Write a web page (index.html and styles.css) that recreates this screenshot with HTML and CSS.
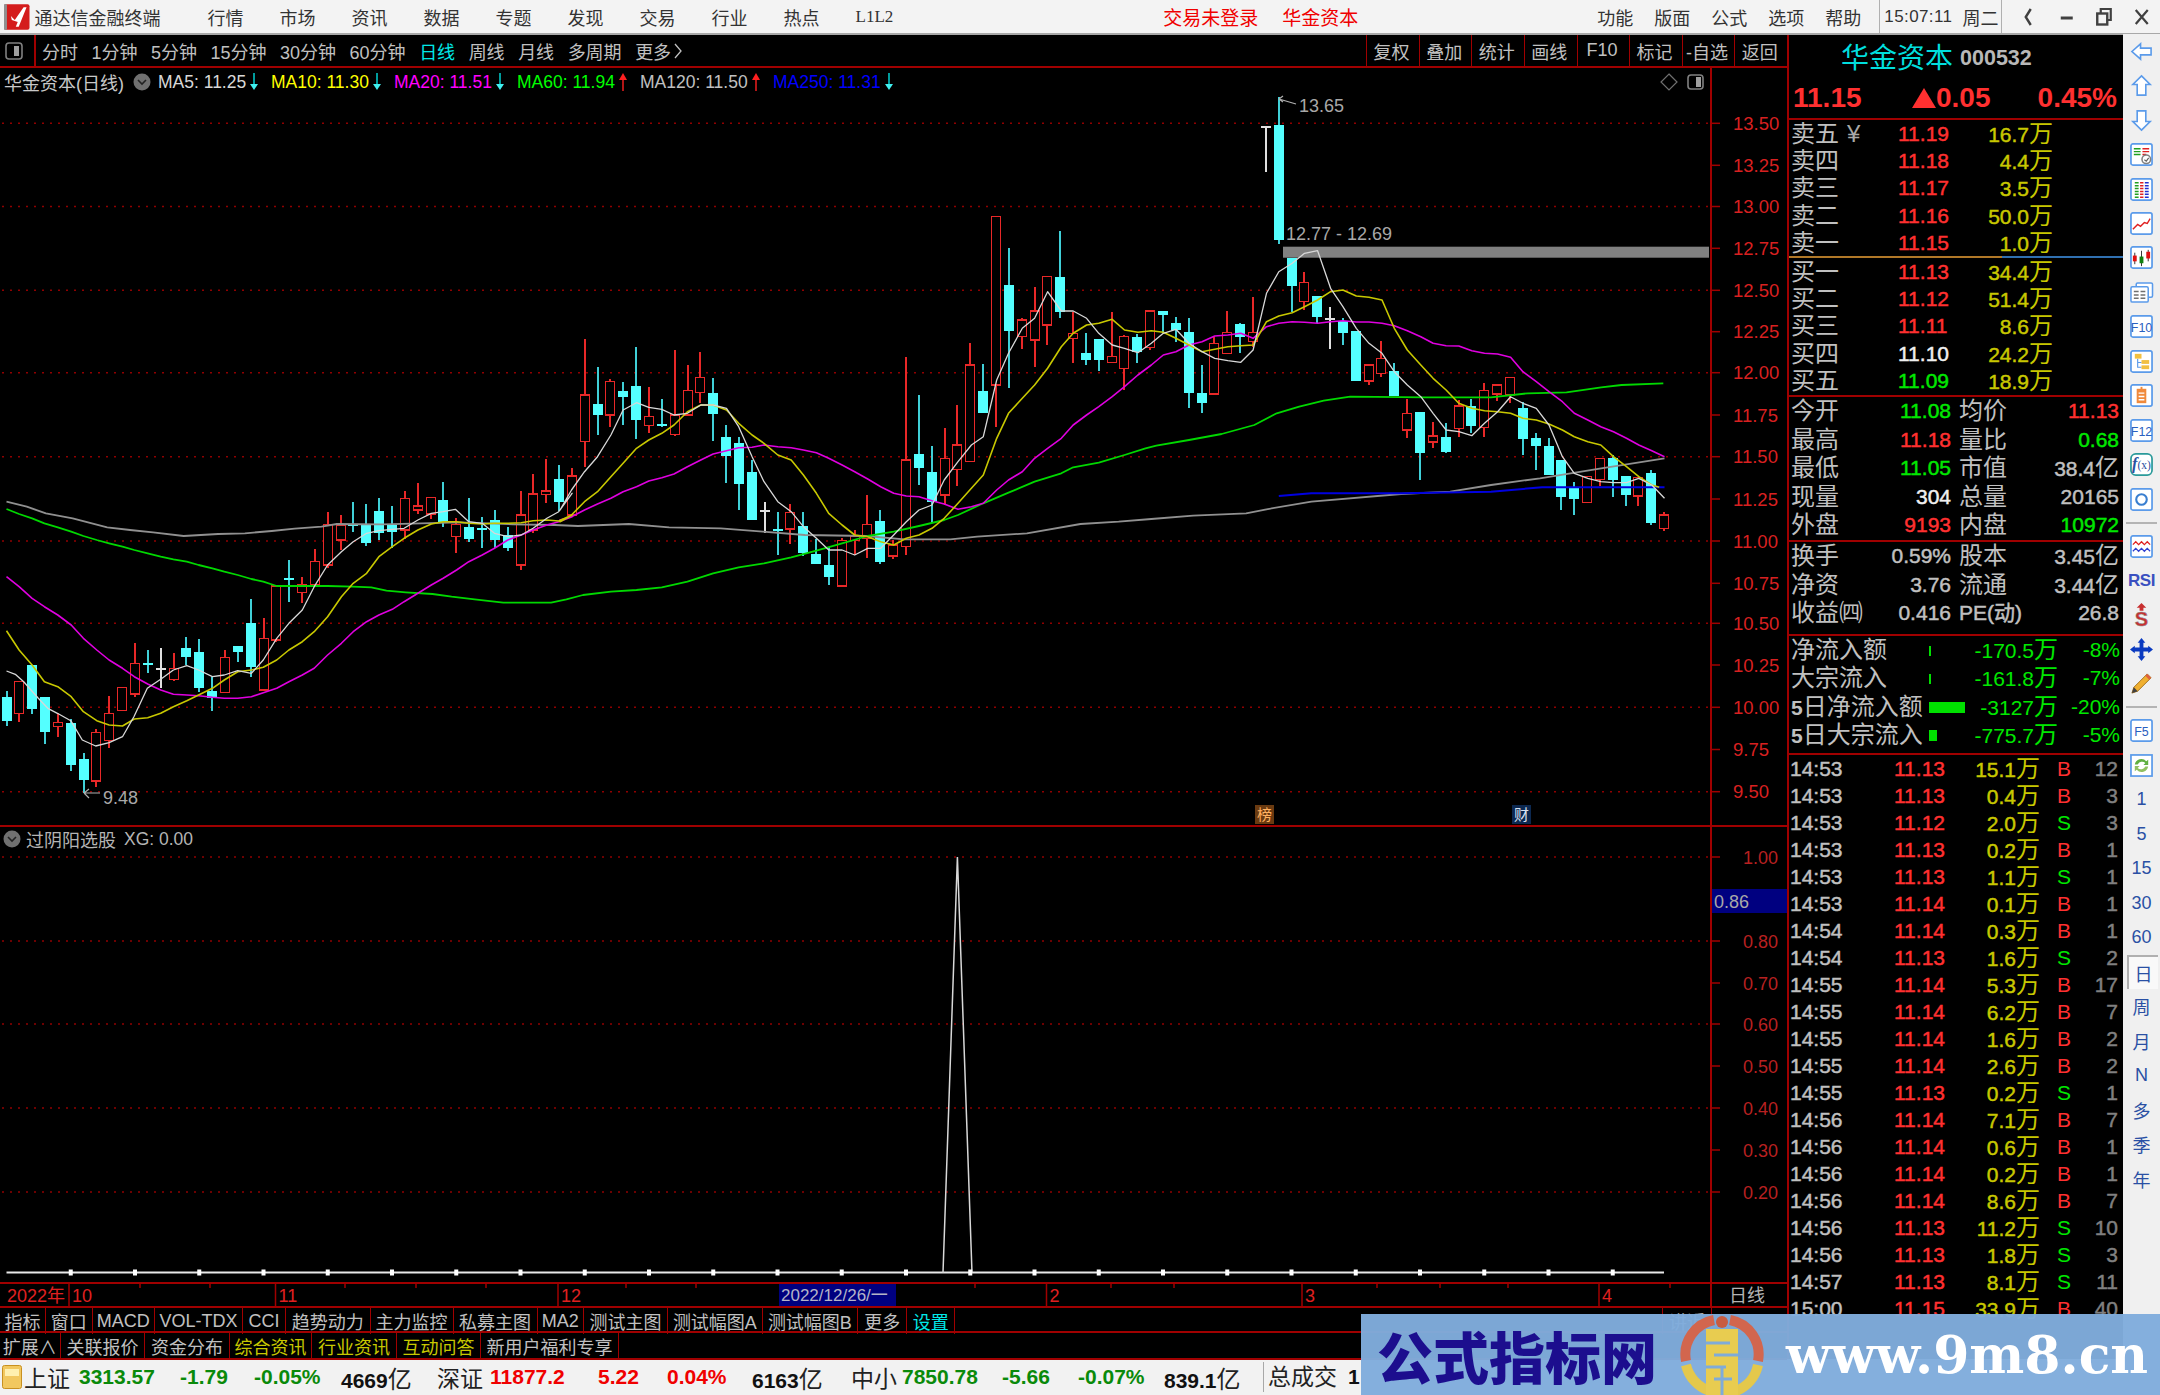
FILE: index.html
```html
<!DOCTYPE html>
<html lang="zh-CN">
<head>
<meta charset="utf-8">
<title>通达信金融终端</title>
<link rel="stylesheet" href="styles.css">
</head>
<body>
<svg class="defs" width="0" height="0">
  <symbol id="arrow-down" viewBox="0 0 10 18"><path d="M5 0V13" stroke="#00e0e0" stroke-width="1.4" fill="none"/><path d="M1 11H9L5 17Z" fill="#40f0f0"/></symbol>
  <symbol id="arrow-up" viewBox="0 0 10 18"><path d="M5 5V18" stroke="#ff2020" stroke-width="1.4" fill="none"/><path d="M1 7H9L5 0Z" fill="#ff2020"/></symbol>
  <symbol id="chev" viewBox="0 0 18 18"><circle cx="9" cy="9" r="8.5" fill="#707070"/><path d="M5 7L9 11L13 7" stroke="#222" stroke-width="1.6" fill="none"/></symbol>
  <symbol id="box" viewBox="0 0 24 24"><rect x="1" y="1" width="22" height="22" rx="2" fill="#fff" stroke="#5b9bea" stroke-width="1.8"/></symbol>
</svg>

<header class="menubar">
  <svg class="logo" viewBox="0 0 26 26"><rect width="26" height="26" rx="2" fill="#d41c1c"/><rect x="0" y="0" width="3" height="26" fill="#909090"/><path d="M7 12L11 16L20 3L23 3L15 23H12L14 18L8 16Z" fill="#fff"/></svg>
  <span class="title">通达信金融终端</span>
  <nav class="menu menu-main">
    <span>行情</span><span>市场</span><span>资讯</span><span>数据</span><span>专题</span><span>发现</span><span>交易</span><span>行业</span><span>热点</span><span class="l1l2">L1L2</span>
  </nav>
  <span class="alert alert-login">交易未登录</span>
  <span class="alert alert-name">华金资本</span>
  <nav class="menu menu-right"><span>功能</span><span>版面</span><span>公式</span><span>选项</span><span>帮助</span></nav>
  <div class="clock"><span class="clock-time">15:07:11</span><span>周二</span></div>
  <div class="winbtns">
    <svg viewBox="0 0 18 22"><path d="M11 3L6 11L11 19" stroke="#404040" stroke-width="2.4" fill="none"/></svg>
    <svg viewBox="0 0 18 22"><path d="M3 12H15" stroke="#404040" stroke-width="3" fill="none"/></svg>
    <svg viewBox="0 0 18 22"><path d="M6 7V3H16V14H12" stroke="#404040" stroke-width="2.2" fill="none"/><rect x="2.5" y="7.5" width="10" height="11" stroke="#404040" stroke-width="2.4" fill="none"/></svg>
    <svg viewBox="0 0 18 22"><path d="M3 4L15 18M15 4L3 18" stroke="#404040" stroke-width="2.2" fill="none"/></svg>
  </div>
</header>

<main class="workspace">
  <section class="left">
    <div class="toolbar">
      <div class="tb-icon"><svg viewBox="0 0 18 18"><rect x="1" y="1" width="16" height="16" rx="3" fill="none" stroke="#808080" stroke-width="1.6"/><rect x="9" y="4" width="5" height="10" fill="#a0a0a0"/></svg></div>
      <nav class="periods">
        <span>分时</span><span>1分钟</span><span>5分钟</span><span>15分钟</span><span>30分钟</span><span>60分钟</span><span class="cyan">日线</span><span>周线</span><span>月线</span><span>多周期</span><span class="more">更多<svg viewBox="0 0 10 18"><path d="M2 2L8 9L2 16" stroke="#c0c0c0" stroke-width="1.3" fill="none"/></svg></span>
      </nav>
      <div class="tools"><span>复权</span><span>叠加</span><span>统计</span><span>画线</span><span>F10</span><span>标记</span><span>-自选</span><span>返回</span></div>
    </div>

    <div class="pane pane-main">
      <svg id="chart-main" class="plot" viewBox="0 68 1787 757"></svg>
      <div class="legend">
        <span class="lg-name">华金资本(日线)</span>
        <svg class="lg-chev"><use href="#chev"/></svg>
        <span class="lg-ma ma5">MA5: 11.25<svg><use href="#arrow-down"/></svg></span>
        <span class="lg-ma ma10">MA10: 11.30<svg><use href="#arrow-down"/></svg></span>
        <span class="lg-ma ma20">MA20: 11.51<svg><use href="#arrow-down"/></svg></span>
        <span class="lg-ma ma60">MA60: 11.94<svg><use href="#arrow-up"/></svg></span>
        <span class="lg-ma ma120">MA120: 11.50<svg><use href="#arrow-up"/></svg></span>
        <span class="lg-ma ma250">MA250: 11.31<svg><use href="#arrow-down"/></svg></span>
      </div>
      <div class="chart-tools">
        <svg viewBox="0 0 18 18"><path d="M9 1L17 9L9 17L1 9Z" fill="none" stroke="#707070" stroke-width="1.2"/></svg>
        <svg viewBox="0 0 18 18"><rect x="1" y="2" width="15" height="14" rx="3" fill="none" stroke="#808080" stroke-width="1.6"/><rect x="9" y="4" width="5" height="10" fill="#a0a0a0"/></svg>
      </div>
      <span class="flag flag-bang">榜</span>
      <span class="flag flag-cai">财</span>
    </div>

    <div class="pane pane-ind">
      <svg id="chart-ind" class="plot" viewBox="0 827 1787 455"></svg>
      <div class="ind-legend"><svg><use href="#chev"/></svg><span>过阴阳选股</span><span class="ind-val">XG: 0.00</span></div>
    </div>

    <div class="dates">
      <svg id="chart-dates" class="plot" viewBox="0 1283 1787 22"></svg>
    </div>

    <div class="tabs tabs-a">
      <span>指标</span><span>窗口</span><span>MACD</span><span>VOL-TDX</span><span>CCI</span><span>趋势动力</span><span>主力监控</span><span>私募主图</span><span>MA2</span><span>测试主图</span><span>测试幅图A</span><span>测试幅图B</span><span>更多</span><span class="cyan">设置</span>
      <span class="tab-spacer"></span><span class="tab-far">讲近</span><span class="tab-far2"></span>
    </div>
    <div class="tabs tabs-b">
      <span>扩展∧</span><span>关联报价</span><span>资金分布</span><span class="olive">综合资讯</span><span class="olive">行业资讯</span><span class="olive">互动问答</span><span>新用户福利专享</span>
    </div>
  </section>

  <section class="quote">
    <div class="q-head">
      <div class="q-title"><span class="q-name">华金资本</span><span class="q-code">000532</span></div>
      <div class="q-price"><span>11.15</span><span class="q-change"><i class="tri"></i>0.05</span><span class="q-pct">0.45%</span></div>
    </div>

    <div class="book">
      <div class="bk"><span>卖五<b class="yen">¥</b></span><span class="red">11.19</span><span class="vol">16.7<em>万</em></span></div>
      <div class="bk"><span>卖四</span><span class="red">11.18</span><span class="vol">4.4<em>万</em></span></div>
      <div class="bk"><span>卖三</span><span class="red">11.17</span><span class="vol">3.5<em>万</em></span></div>
      <div class="bk"><span>卖二</span><span class="red">11.16</span><span class="vol">50.0<em>万</em></span></div>
      <div class="bk"><span>卖一</span><span class="red">11.15</span><span class="vol">1.0<em>万</em></span></div>
    </div>
    <div class="book-split"><i></i><i></i></div>
    <div class="book book-buy">
      <div class="bk"><span>买一</span><span class="red">11.13</span><span class="vol">34.4<em>万</em></span></div>
      <div class="bk"><span>买二</span><span class="red">11.12</span><span class="vol">51.4<em>万</em></span></div>
      <div class="bk"><span>买三</span><span class="red">11.11</span><span class="vol">8.6<em>万</em></span></div>
      <div class="bk"><span>买四</span><span class="white">11.10</span><span class="vol">24.2<em>万</em></span></div>
      <div class="bk"><span>买五</span><span class="green">11.09</span><span class="vol">18.9<em>万</em></span></div>
    </div>

    <div class="stats stats-a">
      <div class="st"><span>今开</span><span class="green">11.08</span><span>均价</span><span class="red">11.13</span></div>
      <div class="st"><span>最高</span><span class="red">11.18</span><span>量比</span><span class="green">0.68</span></div>
      <div class="st"><span>最低</span><span class="green">11.05</span><span>市值</span><span class="grey">38.4<em>亿</em></span></div>
      <div class="st"><span>现量</span><span class="white">304</span><span>总量</span><span class="grey">20165</span></div>
      <div class="st"><span>外盘</span><span class="red">9193</span><span>内盘</span><span class="green">10972</span></div>
    </div>
    <div class="stats stats-b">
      <div class="st"><span>换手</span><span class="grey">0.59%</span><span>股本</span><span class="grey">3.45<em>亿</em></span></div>
      <div class="st"><span>净资</span><span class="grey">3.76</span><span>流通</span><span class="grey">3.44<em>亿</em></span></div>
      <div class="st"><span>收益㈣</span><span class="grey">0.416</span><span class="pe">PE(动)</span><span class="grey">26.8</span></div>
    </div>

    <div class="flows">
      <div class="fl"><span>净流入额</span><i class="bar bar-tick"></i><span class="fl-val">-170.5<em>万</em></span><span class="fl-pct">-8%</span></div>
      <div class="fl"><span>大宗流入</span><i class="bar bar-tick"></i><span class="fl-val">-161.8<em>万</em></span><span class="fl-pct">-7%</span></div>
      <div class="fl"><span><b>5</b>日净流入额</span><i class="bar bar-long"></i><span class="fl-val">-3127<em>万</em></span><span class="fl-pct">-20%</span></div>
      <div class="fl"><span><b>5</b>日大宗流入</span><i class="bar bar-small"></i><span class="fl-val">-775.7<em>万</em></span><span class="fl-pct">-5%</span></div>
    </div>

    <div class="trades">
      <div class="tr"><span>14:53</span><span class="red">11.13</span><span class="vol">15.1<em>万</em></span><span class="b">B</span><span class="n">12</span></div>
      <div class="tr"><span>14:53</span><span class="red">11.13</span><span class="vol">0.4<em>万</em></span><span class="b">B</span><span class="n">3</span></div>
      <div class="tr"><span>14:53</span><span class="red">11.12</span><span class="vol">2.0<em>万</em></span><span class="s">S</span><span class="n">3</span></div>
      <div class="tr"><span>14:53</span><span class="red">11.13</span><span class="vol">0.2<em>万</em></span><span class="b">B</span><span class="n">1</span></div>
      <div class="tr"><span>14:53</span><span class="red">11.13</span><span class="vol">1.1<em>万</em></span><span class="s">S</span><span class="n">1</span></div>
      <div class="tr"><span>14:53</span><span class="red">11.14</span><span class="vol">0.1<em>万</em></span><span class="b">B</span><span class="n">1</span></div>
      <div class="tr"><span>14:54</span><span class="red">11.14</span><span class="vol">0.3<em>万</em></span><span class="b">B</span><span class="n">1</span></div>
      <div class="tr"><span>14:54</span><span class="red">11.13</span><span class="vol">1.6<em>万</em></span><span class="s">S</span><span class="n">2</span></div>
      <div class="tr"><span>14:55</span><span class="red">11.14</span><span class="vol">5.3<em>万</em></span><span class="b">B</span><span class="n">17</span></div>
      <div class="tr"><span>14:55</span><span class="red">11.14</span><span class="vol">6.2<em>万</em></span><span class="b">B</span><span class="n">7</span></div>
      <div class="tr"><span>14:55</span><span class="red">11.14</span><span class="vol">1.6<em>万</em></span><span class="b">B</span><span class="n">2</span></div>
      <div class="tr"><span>14:55</span><span class="red">11.14</span><span class="vol">2.6<em>万</em></span><span class="b">B</span><span class="n">2</span></div>
      <div class="tr"><span>14:55</span><span class="red">11.13</span><span class="vol">0.2<em>万</em></span><span class="s">S</span><span class="n">1</span></div>
      <div class="tr"><span>14:56</span><span class="red">11.14</span><span class="vol">7.1<em>万</em></span><span class="b">B</span><span class="n">7</span></div>
      <div class="tr"><span>14:56</span><span class="red">11.14</span><span class="vol">0.6<em>万</em></span><span class="b">B</span><span class="n">1</span></div>
      <div class="tr"><span>14:56</span><span class="red">11.14</span><span class="vol">0.2<em>万</em></span><span class="b">B</span><span class="n">1</span></div>
      <div class="tr"><span>14:56</span><span class="red">11.14</span><span class="vol">8.6<em>万</em></span><span class="b">B</span><span class="n">7</span></div>
      <div class="tr"><span>14:56</span><span class="red">11.13</span><span class="vol">11.2<em>万</em></span><span class="s">S</span><span class="n">10</span></div>
      <div class="tr"><span>14:56</span><span class="red">11.13</span><span class="vol">1.8<em>万</em></span><span class="s">S</span><span class="n">3</span></div>
      <div class="tr"><span>14:57</span><span class="red">11.13</span><span class="vol">8.1<em>万</em></span><span class="s">S</span><span class="n">11</span></div>
      <div class="tr"><span>15:00</span><span class="red">11.15</span><span class="vol">33.9<em>万</em></span><span class="b">B</span><span class="n">40</span></div>
    </div>
  </section>

  <aside class="side">
    <div class="sb"><svg viewBox="0 0 24 24"><path d="M2 12L11 4V8.500H22V15.500H11V20Z" fill="#fff" stroke="#5b9bea" stroke-width="1.7"/></svg></div>
    <div class="sb"><svg viewBox="0 0 24 24"><path d="M12 2L21 11H16.500V22H7.500V11H3Z" fill="#fff" stroke="#5b9bea" stroke-width="1.7"/></svg></div>
    <div class="sb"><svg viewBox="0 0 24 24"><path d="M12 22L21 13H16.500V2H7.500V13H3Z" fill="#fff" stroke="#5b9bea" stroke-width="1.7"/></svg></div>
    <div class="sb"><svg viewBox="0 0 24 24"><use href="#box"/><path d="M4 6H11M4 9H11M4 12H11" stroke="#20a020" stroke-width="1.5"/><path d="M13 6H20M13 9H20M13 12H17" stroke="#e02020" stroke-width="1.5"/><circle cx="17" cy="17" r="4.500" fill="#fff" stroke="#808080" stroke-width="1.600"/><path d="M15 17.500L17 19L19.500 15.500" stroke="#606060" stroke-width="1.200" fill="none"/></svg></div>
    <div class="sb"><svg viewBox="0 0 24 24"><use href="#box"/><path d="M5 5H9M5 8H9M5 11H9M5 14H9M5 17H9M5 20H9" stroke="#20a020" stroke-width="1.500"/><path d="M10.500 5H14M10.500 8H14M10.500 11H14M10.500 14H14M10.500 17H14M10.500 20H14" stroke="#e02020" stroke-width="1.500"/><path d="M15.500 5H19.500M15.500 8H19.500M15.500 11H19.500M15.500 14H19.500M15.500 17H19.500M15.500 20H19.500" stroke="#2030d0" stroke-width="1.500"/></svg></div>
    <div class="sb"><svg viewBox="0 0 24 24"><use href="#box"/><path d="M3 18L8 13L11 15L15 11L18 12L21 7" stroke="#e02020" stroke-width="1.500" fill="none"/></svg></div>
    <div class="sb"><svg viewBox="0 0 24 24"><use href="#box"/><path d="M5 7V19M12 5V21M19 4V16" stroke="#303030" stroke-width="1"/><rect x="3" y="10" width="4" height="6" fill="#e01010"/><rect x="10" y="11" width="4" height="7" fill="#108010"/><rect x="17" y="6" width="4" height="7" fill="#e01010"/></svg></div>
    <div class="sb"><svg viewBox="0 0 24 24"><rect x="6.500" y="2" width="17" height="15" rx="1.500" fill="#fff" stroke="#5b9bea" stroke-width="1.600"/><rect x="1" y="6" width="18" height="16" rx="1.500" fill="#fff" stroke="#5b9bea" stroke-width="1.600"/><path d="M4 11H9M11 11H16M4 14.500H9M11 14.500H16M4 18H9M11 18H16" stroke="#707070" stroke-width="1.600"/></svg></div>
    <div class="sb"><svg viewBox="0 0 24 24"><use href="#box"/><text x="12" y="17.500" class="sb-t">F10</text></svg></div>
    <div class="sb"><svg viewBox="0 0 24 24"><use href="#box"/><path d="M8 9V18H12M8 13H12" stroke="#5b9bea" stroke-width="1.200" fill="none"/><rect x="5" y="4" width="7" height="5" fill="#f2c040"/><rect x="12" y="10.500" width="8" height="4" fill="#f2c040"/><rect x="12" y="16" width="8" height="4" fill="#f2c040"/></svg></div>
    <div class="sb"><svg viewBox="0 0 24 24"><use href="#box"/><rect x="7" y="5" width="10" height="15" fill="#f08a3c"/><rect x="11" y="3" width="2" height="3" fill="#f08a3c"/><path d="M9 9.500H15M9 13H15M9 16.500H15" stroke="#fff" stroke-width="1.500"/></svg></div>
    <div class="sb"><svg viewBox="0 0 24 24"><use href="#box"/><text x="12" y="17.500" class="sb-t">F12</text></svg></div>
    <div class="sb"><svg viewBox="0 0 24 24"><rect x="1" y="1" width="22" height="22" rx="5" fill="#fff" stroke="#2a9a9a" stroke-width="1.800"/><text x="12" y="17" class="sb-f"><tspan class="sb-fi">f</tspan>(x)</text></svg></div>
    <div class="sb"><svg viewBox="0 0 24 24"><use href="#box"/><circle cx="12" cy="12" r="5.500" fill="none" stroke="#3a7fd0" stroke-width="2.200"/></svg></div>
    <div class="sb-sep"></div>
    <div class="sb"><svg viewBox="0 0 24 24"><use href="#box"/><path d="M3 10L6 7L9 10L12 7L15 10L18 7L21 10" stroke="#e02020" stroke-width="1.300" fill="none"/><path d="M3 17L6 14L9 17L12 14L15 17L18 14L21 17" stroke="#3040d0" stroke-width="1.300" fill="none"/></svg></div>
    <div class="sb"><span class="sb-rsi">RSI</span></div>
    <div class="sb"><svg viewBox="0 0 24 24"><path d="M12 0L17 5H14V8H10V5H7Z" fill="#c83030"/><text x="12" y="24" class="sb-s">S</text></svg></div>
    <div class="sb"><svg viewBox="0 0 24 24"><path d="M12 0L16 5H14V10H19V8L24 12L19 16V14H14V19H16L12 24L8 19H10V14H5V16L0 12L5 8V10H10V5H8Z" fill="#0a3ac0"/></svg></div>
    <div class="sb"><svg viewBox="0 0 24 24"><path d="M2 22L4 16L18 2L22 6L8 20Z" fill="#f0b030" stroke="#a07020" stroke-width="1"/><path d="M16 4L20 8L22 6L18 2Z" fill="#e06040"/><path d="M2 22L4 16L8 20Z" fill="#404040"/></svg></div>
    <div class="sb-sep"></div>
    <div class="sb"><svg viewBox="0 0 24 24"><use href="#box"/><text x="12" y="17.500" class="sb-t">F5</text></svg></div>
    <div class="sb"><svg viewBox="0 0 24 24"><rect x="1" y="1" width="22" height="22" fill="#fff" stroke="#5b9bea" stroke-width="1.800"/><path d="M5 11A7 7 0 0 1 17 7.500L19 6V11.500H14L16 9.500A5 5 0 0 0 8 11Z" fill="#60b040"/><path d="M19 13A7 7 0 0 1 7 16.500L5 18V12.500H10L8 14.500A5 5 0 0 0 16 13Z" fill="#90c060"/></svg></div>
    <div class="sb sb-n">1</div>
    <div class="sb sb-n">5</div>
    <div class="sb sb-n">15</div>
    <div class="sb sb-n">30</div>
    <div class="sb sb-n">60</div>
    <div class="sb sb-n sb-on">日</div>
    <div class="sb sb-n">周</div>
    <div class="sb sb-n">月</div>
    <div class="sb sb-n">N</div>
    <div class="sb sb-n">多</div>
    <div class="sb sb-n">季</div>
    <div class="sb sb-n">年</div>
  </aside>
</main>

<footer class="status">
  <svg class="st-ico" viewBox="0 0 20 24"><rect x="0.500" y="0.500" width="19" height="23" rx="2" fill="#f2c860" stroke="#c89020"/><rect x="3" y="4" width="14" height="7" fill="#fff0b0"/></svg>
  <span class="idx">上证</span><span class="up">3313.57</span><span class="up">-1.79</span><span class="up">-0.05%</span><span class="amt">4669<em>亿</em></span>
  <span class="idx">深证</span><span class="dn">11877.2</span><span class="dn">5.22</span><span class="dn">0.04%</span><span class="amt">6163<em>亿</em></span>
  <span class="idx">中小</span><span class="up">7850.78</span><span class="up">-5.66</span><span class="up">-0.07%</span><span class="amt">839.1<em>亿</em></span>
  <span class="idx total">总成交</span><span class="amt">1</span>
</footer>

<div class="watermark">
  <span class="wm-cn">公式指标网</span>
  <svg class="wm-logo" viewBox="0 0 84 80">
    <path d="M6 46A35 35 0 0 1 34 5" stroke="#d2664e" stroke-width="10" fill="none"/>
    <path d="M50 5A35 35 0 0 1 78 46" stroke="#d2664e" stroke-width="10" fill="none"/>
    <path d="M6 50A36 36 0 0 0 30 76" stroke="#e4c84c" stroke-width="10" fill="none"/>
    <path d="M78 50A36 36 0 0 1 56 76" stroke="#e4c84c" stroke-width="10" fill="none"/>
    <circle cx="42" cy="7" r="6" fill="#c85c40"/>
    <rect x="26" y="14" width="32" height="66" fill="#e8cc50"/>
    <path d="M26 28H50M34 40H58M26 52H46M42 52V80M34 64H52" stroke="#7fabd9" stroke-width="3" fill="none"/>
  </svg>
  <span class="wm-url">www.9m8.cn</span>
</div>

<script src="chart.js"></script>
</body>
</html>
```
FILE: styles.css
```css
* { box-sizing: border-box; margin: 0; padding: 0; }
html, body { width: 2160px; height: 1395px; overflow: hidden; background: #000; }
body { position: relative; font-family: "Liberation Sans", "Noto Sans CJK SC", sans-serif; font-size: 18px; color: #c0c0c0; }
em, i { font-style: normal; }
.defs { position: absolute; }

.cyan { color: #00e8e8; }
.olive { color: #c8c800; }
.red { color: #ff3030; }
.green { color: #00e800; }
.white { color: #f0f0f0; }
.grey { color: #c0c0c0; }

/* top menu */
.menubar { display: flex; align-items: center; height: 35px; background: #f3f3f3; border-bottom: 2px solid #a8a8a8; color: #333; white-space: nowrap; }
.logo { width: 26px; height: 26px; margin-left: 4px; }
.title { margin-left: 5px; width: 126px; }
.menu { display: flex; align-items: center; }
.menu span { display: block; }
.menu-main { margin-left: 47px; gap: 36px; }
.l1l2 { font-family: "Liberation Serif", serif; font-size: 17px; }
.alert { color: #f00000; font-size: 19px; }
.alert-login { margin-left: 270px; }
.alert-name { margin-left: 24px; }
.menu-right { margin-left: 239px; gap: 21px; }
.clock { display: flex; align-items: center; height: 33px; margin-left: 18px; width: 125px; padding-left: 4px; gap: 10px; border-left: 1px solid #b0b0b0; border-right: 1px solid #b0b0b0; }
.clock-time { font-size: 17px; letter-spacing: .4px; }
.winbtns { display: flex; margin-left: 8px; }
.winbtns svg { width: 37.500px; height: 22px; }

.workspace { display: flex; height: 1324px; }
.left { width: 1787px; flex: none; display: flex; flex-direction: column; }

/* period toolbar */
.toolbar { display: flex; height: 33px; flex: none; border-bottom: 2px solid #a00000; }
.tb-icon { width: 36px; display: flex; align-items: center; justify-content: center; border-right: 2px solid #a00000; padding-right: 6px; }
.tb-icon svg { width: 18px; height: 18px; }
.periods { display: flex; align-items: center; gap: 13.500px; padding-left: 6px; }
.periods .more { display: flex; align-items: center; gap: 2px; }
.more svg { width: 10px; height: 18px; }
.tools { display: flex; margin-left: auto; }
.tools span { width: 52.600px; display: flex; align-items: center; justify-content: center; border-left: 1.500px solid #a00000; padding-right: 3px; }

/* panes */
.pane { position: relative; flex: none; border-bottom: 2px solid #a00000; }
.pane-main { height: 759px; }
.pane-ind { height: 457px; }
.plot { display: block; width: 1787px; height: 100%; }
.legend { position: absolute; left: 4px; top: 0; height: 28px; display: grid; grid-template-columns: 129px 25px 113px 123px 123px 123px 133px auto; align-items: center; white-space: nowrap; }
.lg-chev { width: 18px; height: 18px; }
.lg-name { font-size: 18px; color: #c8c8c8; }
.lg-ma { display: flex; align-items: center; gap: 3px; font-size: 17.500px; }
.lg-ma svg { width: 10px; height: 18px; }
.ma5 { color: #d8d8d8; }
.ma10 { color: #ffff00; }
.ma20 { color: #ff00ff; }
.ma60 { color: #00ff00; }
.ma120 { color: #c0c0c0; }
.ma250 { color: #0000ff; }
.chart-tools { position: absolute; left: 1660px; top: 5px; display: flex; gap: 9px; }
.chart-tools svg { width: 18px; height: 18px; }
.flag { position: absolute; top: 737px; width: 19px; height: 19px; line-height: 19px; text-align: center; font-size: 15px; }
.flag-bang { left: 1255px; background: #6a3a10; color: #ffb060; }
.flag-cai { left: 1512px; background: #0c2850; color: #d8e0f0; }

.ind-legend { position: absolute; left: 3px; top: 2px; height: 20px; display: flex; align-items: center; color: #b4b4b4; }
.ind-legend svg { width: 18px; height: 18px; margin-right: 5px; }
.ind-val { margin-left: 8px; font-size: 17.500px; }

.dates { height: 24px; flex: none; border-bottom: 2px solid #a00000; }

/* chart svg */
.gridline { stroke: #900000; stroke-width: 1.500; stroke-dasharray: 2 6; fill: none; }
.axisline { stroke: #a00000; stroke-width: 2; fill: none; }
.axtick { stroke: #a00000; stroke-width: 1.500; }
.axlabel { fill: #d82020; font-size: 18.500px; }
.axlabel-dim { fill: #b82020; font-size: 18px; }
.chlabel { fill: #a8a8a8; font-size: 18px; }
.dlabel { fill: #e02020; font-size: 18px; }
.dcur { fill: #b4b4c8; font-size: 17px; }
.dright { fill: #b4b4b4; font-size: 18px; }
.ma { fill: none; stroke-linejoin: round; }
.line5 { stroke: #d8d8d8; stroke-width: 1.300; }
.line10 { stroke: #c8c800; stroke-width: 1.600; }
.line20 { stroke: #e000e0; stroke-width: 1.600; }
.line60 { stroke: #00d800; stroke-width: 1.800; }
.line120 { stroke: #909090; stroke-width: 1.800; }
.line250 { stroke: #0000e0; stroke-width: 2; }
.c-wick-r { stroke: #e82828; stroke-width: 1.500; }
.c-wick-c { stroke: #40d0d8; stroke-width: 1.500; }
.c-wick-w { stroke: #e0e0e0; stroke-width: 1.500; }
.c-body-r { fill: #000; stroke: #e82828; stroke-width: 1.500; }
.c-body-c { fill: #54ffff; }
.c-body-w { fill: #e0e0e0; }
.crisp { shape-rendering: crispEdges; }

/* bottom tabs */
.tabs { display: grid; flex: none; align-items: stretch; }
.tabs span { display: flex; align-items: center; justify-content: center; border-right: 1.500px solid #a00000; white-space: nowrap; }
.tabs-a { height: 25px; border-bottom: 2px solid #a00000; grid-template-columns: 46px 46.500px 62.500px 88px 43px 84.500px 83px 84px 46.400px 84px 95px 95px 49.500px 47.500px 708px 49px 36px 39px; }
.tabs-a .tab-spacer { border-right: 1.500px solid #a00000; }
.tabs-a .tab-far2 { border-right: none; }
.tabs-b { height: 27px; border-bottom: 2px solid #a00000; grid-template-columns: 60.600px 84.800px 84.200px 82.900px 84.200px 84.800px 137.100px; }

/* quote panel */
.quote { width: 336px; flex: none; background: #000; border-left: 2px solid #a00000; font-weight: 400; }
.q-head { height: 85px; border-bottom: 2px solid #a00000; }
.q-title { height: 42px; display: flex; align-items: center; padding: 0 0 0 52px; gap: 7px; }
.q-name { font-size: 28px; color: #00dede; }
.q-code { font-size: 21.500px; font-weight: 700; color: #b8b8b8; margin-top: 5px; }
.q-price { height: 41px; display: grid; grid-template-columns: 119px auto 1fr; align-items: center; padding: 0 6px 0 4px; font-size: 28px; font-weight: 700; color: #ff3030; }
.q-change { display: flex; align-items: center; }
.tri { display: block; width: 0; height: 0; border-left: 12px solid transparent; border-right: 12px solid transparent; border-bottom: 20px solid #ff3030; }
.q-pct { text-align: right; }

.book { height: 136px; }
.book-buy { height: 137px; }
.bk { display: grid; grid-template-columns: 109px 53px 102px; height: 27.200px; line-height: 27.200px; font-size: 24px; }
.bk > span:first-child { padding-left: 2px; white-space: nowrap; color: #c0c0c0; }
.bk > span:nth-child(2), .bk .vol { font-size: 21px; -webkit-text-stroke: .45px; }
.vol { text-align: right; color: #c8c800; }
.vol em, .fl-val em { font-size: 24px; font-weight: 400; -webkit-text-stroke: 0; }
.yen { font-size: 24px; font-weight: 400; margin-left: 8px; color: #a8a8a8; }
.book-split { display: grid; grid-template-columns: 213px 1fr; height: 2px; }
.book-split i:first-child { background: #b07828; }
.book-split i:last-child { background: #3070b0; }

.stats { border-top: 2px solid #a00000; }
.stats-a { height: 145px; }
.stats-b { height: 94px; }
.st { display: grid; grid-template-columns: 82px 80px 78px 90px; height: 28.600px; line-height: 28.600px; font-size: 24px; }
.st > span:nth-child(odd) { color: #c0c0c0; padding-left: 2px; white-space: nowrap; }
.st > span:nth-child(3) { padding-left: 8px; }
.st > span:nth-child(even) { text-align: right; font-size: 21px; -webkit-text-stroke: .45px; white-space: nowrap; }
.st em { font-size: 24px; font-weight: 400; -webkit-text-stroke: 0; }
.st .pe { font-size: 21px; -webkit-text-stroke: .45px; }

.flows { border-top: 2px solid #a00000; height: 119px; }
.fl { display: grid; grid-template-columns: 140px 40px 89px 62px; height: 28.300px; line-height: 28.300px; font-size: 24px; white-space: nowrap; }
.fl > span:first-child { padding-left: 2px; color: #c0c0c0; }
.fl b { font-size: 21px; }
.bar { display: block; align-self: center; background: #00e000; }
.bar-tick { width: 2px; height: 10px; }
.bar-long { width: 36px; height: 11px; }
.bar-small { width: 8px; height: 11px; }
.fl-val, .fl-pct { text-align: right; color: #00e800; font-size: 21px; }

.trades { border-top: 2px solid #a00000; overflow: hidden; height: 608px; }
.tr { display: grid; grid-template-columns: 105px 52px 94px 48px 30px; height: 27px; line-height: 27px; font-size: 21px; -webkit-text-stroke: .45px; }
.tr > span:first-child { padding-left: 1px; color: #c0c0c0; }
.tr .b, .tr .s { text-align: center; font-size: 21px; -webkit-text-stroke: 0; }
.tr .b { color: #ff3030; }
.tr .s { color: #00e800; }
.tr .n { text-align: right; color: #808080; }

/* right tool strip */
.side { flex: 1; background: #f0f0f0; margin-top: -1px; }
.sb { height: 34.460px; display: flex; align-items: center; justify-content: center; }
.sb svg { width: 23px; height: 23px; overflow: visible; }
.sb-sep { height: 12.500px; display: flex; align-items: center; padding: 0 3px; }
.sb-sep::before { content: ""; display: block; width: 100%; height: 2px; background: #b4b4b4; }
.sb-t { font-family: "Liberation Sans", sans-serif; font-size: 13px; text-anchor: middle; fill: #2a60c0; }
.sb-f { font-family: "Liberation Serif", serif; font-size: 12px; text-anchor: middle; fill: #2a50a0; }
.sb-fi { font-style: italic; font-size: 17px; font-weight: 700; }
.sb-s { font-family: "Liberation Sans", sans-serif; font-weight: 700; font-size: 21px; text-anchor: middle; fill: #c83030; stroke: #909090; stroke-width: .5px; }
.sb-rsi { font-weight: 700; font-size: 17px; color: #3a50c0; letter-spacing: -.5px; }
.sb-n { color: #2a50a4; font-size: 18px; }
.sb-on { background: #f9f9f9; border-top: 2px solid #b0b0b0; border-left: 2px solid #b0b0b0; margin-left: 4px; margin-right: 2px; }

/* status bar */
.status { display: grid; align-items: center; height: 36px; background: #f2f2f2; grid-template-columns: 24px 55px 101px 74px 87px 96px 53px 108px 69px 85px 99px 51px 100px 76px 86px 99px 85px 1fr; white-space: nowrap; }
.st-ico { width: 20px; height: 24px; margin-left: 2px; }
.status > span { font-size: 21px; font-weight: 700; }
.status .idx { font-size: 23px; font-weight: 400; color: #222; }
.status .up { color: #0a8a0a; }
.status .dn { color: #f00000; }
.status .amt { color: #111; }
.status em { font-size: 24px; font-weight: 400; color: #222; }
.status .total { border-left: 1.500px solid #a8a8a8; padding-left: 4px; height: 30px; line-height: 30px; }

/* site watermark */
.watermark { position: absolute; left: 1361px; top: 1314px; width: 799px; height: 81px; background: rgba(128, 172, 220, .97); display: flex; align-items: center; }
.wm-cn { margin-left: 16px; width: 283px; font-family: "Noto Sans CJK SC", sans-serif; font-weight: 900; font-size: 56px; line-height: 81px; color: #1c0e8e; white-space: nowrap; }
.wm-logo { width: 84px; height: 80px; margin-left: 20px; }
.wm-url { margin-left: 22px; font-family: "DejaVu Serif", serif; font-weight: 700; font-size: 52px; color: #fff; white-space: nowrap; }
```
FILE: chart.js
```js
// Daily candles read off the chart: [body top, body bottom, wick top, wick bottom, colour].
// Values are in 1/3 px units relative to the group's base line.
var CANDLES_A = [
  [1100,1173,1082,1188,'c'],[1055,1150,1055,1175,'r'],[1005,1138,1005,1152,'c'],[1100,1205,1100,1242,'c'],
  [1177,1190,1150,1220,'r'],[1180,1305,1168,1323,'c'],[1288,1350,1270,1390,'c'],[1208,1353,1198,1372,'r'],
  [1150,1232,1098,1255,'r'],[1073,1142,1073,1142,'r'],[1000,1092,940,1102,'r'],[1000,1008,960,1030,'c'],
  [1014,1017,955,1075,'w'],[1015,1048,968,1052,'r'],[955,982,922,1005,'c'],[965,1075,928,1085,'c'],
  [1082,1105,1040,1142,'c'],[983,1088,960,1090,'r'],[947,967,947,995,'c'],[878,1012,806,1040,'c'],
  [925,1080,865,1080,'r'],[768,930,768,935,'r'],[744,751,690,815,'c'],[763,787,740,820,'r'],
  [695,765,658,770,'r'],[583,705,545,715,'r'],[585,630,555,660,'r'],[582,585,515,605,'c'],
  [585,638,522,648,'c'],[542,610,505,630,'c'],[585,605,528,655,'c'],[505,600,482,628,'r'],
  [528,540,460,553,'r'],[502,552,502,568,'r'],[510,575,455,590,'c'],[583,620,565,670,'r'],
  [590,627,505,635,'c'],[594,598,562,653,'c'],[570,630,540,655,'c'],[615,653,590,662,'c'],
  [555,705,482,720,'r'],[492,600,432,610,'r'],[483,493,388,520,'r'],[447,515,405,542,'c'],
  [438,555,415,560,'r']
];
var CANDLES_B = [
  [945,1085,778,1160,'r'],[972,1005,862,1065,'c'],[905,1005,898,1042,'r'],[932,952,905,1035,'c'],
  [918,1020,800,1078,'c'],[1010,1036,922,1060,'r'],[1032,1038,958,1042,'c'],[1005,1064,810,1068,'r'],
  [932,1005,855,1005,'r'],[892,938,815,970,'r'],[940,1002,895,1082,'c'],[1070,1128,1035,1208,'c'],
  [1090,1213,1070,1290,'c'],[1175,1320,1140,1320,'c'],[1290,1294,1265,1360,'w'],[1348,1352,1295,1425,'c'],
  [1297,1347,1272,1392,'r'],[1337,1418,1295,1428,'c'],[1422,1452,1378,1452,'c'],[1455,1492,1400,1515,'c'],
  [1382,1518,1375,1518,'r'],[1370,1382,1350,1425,'r'],[1333,1375,1245,1435,'r'],[1322,1447,1290,1452,'c'],
  [1395,1428,1380,1438,'r'],[1140,1400,832,1425,'r'],[1122,1164,945,1215,'c'],[1175,1265,1098,1330,'c'],
  [1135,1245,1045,1275,'r'],[1095,1168,975,1218,'r'],[855,1145,790,1145,'r'],[932,998,853,1000,'c'],
  [410,915,410,1042,'r'],[616,752,503,925,'c'],[720,770,715,808,'r'],[693,780,620,862,'r'],
  [590,735,590,795,'r'],[590,695,453,715,'c'],[760,775,695,850,'r'],[818,840,760,855,'c'],
  [778,840,778,872,'c'],[830,848,695,848,'r'],[770,865,765,930,'r'],[770,815,762,850,'c'],
  [693,803,693,810,'r'],
  [693,705,693,760,'c'],[730,750,710,785,'c'],[755,938,715,985,'c'],[940,970,855,998,'c'],
  [790,942,770,942,'r'],[757,820,692,822,'r'],[733,770,728,820,'c'],[757,785,652,800,'r'],
  [138,142,140,275,'w'],[135,480,50,492,'c'],[535,618,535,695,'c'],[608,665,575,690,'r'],
  [648,710,648,728,'c'],[715,719,680,808,'w'],[722,760,715,795,'c'],[752,903,752,903,'c'],
  [855,903,855,915,'r'],[835,880,782,890,'r'],[872,948,850,948,'c'],[1000,1050,958,1075,'r'],
  [995,1118,995,1200,'c'],[1068,1086,1025,1105,'r'],[1072,1115,1030,1118,'c'],[978,1045,960,1072,'r'],
  [978,1038,958,1060,'c'],[932,1042,908,1070,'r'],[915,942,915,962,'r'],[892,945,892,970,'r'],
  [985,1078,965,1125,'c'],[1075,1097,1060,1170,'c'],[1098,1185,1075,1185,'c'],[1140,1250,1140,1290,'c'],
  [1222,1258,1205,1305,'c'],[1190,1267,1190,1267,'r'],[1135,1198,1135,1218,'r'],[1133,1200,1125,1250,'c'],
  [1188,1245,1188,1278,'c'],[1192,1248,1192,1278,'r'],[1180,1330,1170,1335,'c'],[1305,1345,1295,1353,'r']
];

// Moving averages, given per chart section as flat x,y lists.
var MA = {
  line5: [
    [17,1023,40,1033,62,1055,100,1105,125,1135,150,1150,185,1172,215,1230,250,1248,285,1238,320,1220,350,1160,385,1075,420,1048,453,1020,488,1007,519,1020,555,1040,586,1035,621,1022,657,1030,688,990,723,925,755,880,790,840,821,770,856,705,892,665,923,635,958,610,990,602,1025,598,1056,595,1092,570,1127,550,1158,545,1190,538,1225,575,1260,580,1292,610,1327,620,1362,615,1393,595,1429,565,1460,545,1495,490],
    [0,1290,30,1230,64,1175,98,1130,133,1065,165,990,200,968,232,982,266,988,298,1005,333,1000,368,975,400,975,435,985,467,1040,502,1130,533,1205,569,1265,604,1295,636,1340,670,1375,702,1410,737,1410,770,1425,804,1405,838,1405,872,1365,905,1325,938,1290,972,1275,1004,1200,1040,1145,1075,1095,1106,1070,1141,900,1172,820,1208,745,1240,715,1274,635,1310,693,1341,693,1376,715,1408,760,1443,795,1475,805,1510,818,1545,790],
    [57,760,88,748,120,790,152,815,183,835,215,842,247,847,277,810,310,640,340,575,373,550,403,520,435,512,467,625,497,680,530,745,561,790,593,820,623,875,655,915,688,950,718,1000,750,1050,781,1055,813,1067,844,1030,876,995,908,950,938,970,971,985,1002,1035,1035,1130,1064,1180,1097,1195,1129,1205,1160,1208,1192,1208,1222,1195,1254,1215,1285,1255]
  ],
  line10: [
    [17,902,50,960,84,1005,116,1055,151,1070,186,1100,218,1145,253,1172,285,1185,320,1188,351,1167,386,1163,420,1150,453,1130,488,1112,519,1095,555,1075,586,1050,621,1025,657,1020,688,1012,723,990,755,960,790,935,821,905,856,860,892,800,923,760,958,730,990,680,1025,650,1056,625,1092,600,1127,582,1158,575,1193,575,1225,580,1260,582,1292,580,1327,580,1362,578,1393,572,1429,570,1460,573,1495,555],
    [0,1325,30,1305,64,1265,98,1235,133,1190,165,1150,200,1105,232,1080,266,1060,298,1035,333,995,368,975,400,975,435,990,467,1030,502,1065,533,1090,569,1125,604,1140,636,1185,670,1240,702,1300,737,1335,770,1365,804,1370,838,1385,872,1395,905,1375,938,1365,972,1345,1004,1315,1040,1270,1075,1225,1106,1185,1141,1075,1172,1000,1208,955,1240,915,1274,865,1310,800,1341,760,1376,735,1408,730,1443,718,1475,750,1510,757,1545,752],
    [57,757,88,775,120,795,152,815,183,808,215,800,247,797,277,795,310,725,340,708,373,698,403,680,435,660,467,635,497,630,530,648,561,652,593,660,623,745,655,810,688,855,718,895,750,930,781,970,813,985,844,992,876,995,908,1000,938,1015,971,1020,1002,1032,1035,1050,1064,1070,1097,1085,1129,1095,1160,1130,1192,1160,1222,1190,1254,1215,1272,1222]
  ],
  line20: [
    [17,740,50,770,84,805,116,830,151,855,186,885,218,925,253,960,285,990,320,1015,351,1040,386,1062,420,1080,453,1093,488,1095,519,1097,555,1102,586,1105,621,1105,657,1100,688,1088,723,1075,755,1055,790,1035,821,1015,856,975,892,940,923,905,958,875,990,855,1025,838,1056,815,1092,790,1127,765,1158,745,1193,720,1225,695,1260,675,1292,655,1327,630,1362,615,1393,600,1429,585,1460,575,1495,560],
    [0,1320,30,1310,64,1290,98,1272,133,1255,165,1235,200,1220,232,1203,266,1193,298,1182,333,1160,368,1140,400,1122,435,1112,467,1103,502,1102,533,1095,569,1100,604,1103,636,1110,670,1118,702,1135,737,1155,770,1175,804,1197,838,1220,872,1240,905,1248,938,1250,972,1262,1004,1272,1040,1288,1075,1280,1106,1270,1141,1230,1172,1200,1208,1175,1240,1135,1274,1105,1310,1075,1341,1035,1376,1005,1408,980,1443,950,1475,920,1510,885,1545,855],
    [57,825,88,815,120,795,152,785,183,768,215,765,247,760,277,775,310,740,340,730,373,725,403,727,435,730,467,725,497,722,530,726,561,726,593,730,623,737,655,752,688,770,718,790,750,797,781,798,813,812,844,820,876,822,908,832,938,875,971,905,1002,935,1035,965,1064,1000,1097,1020,1129,1040,1160,1055,1192,1075,1222,1095,1254,1112,1285,1130]
  ],
  line60: [
    [17,537,50,552,84,565,116,580,151,592,186,605,218,618,253,630,285,640,320,650,351,660,386,670,420,680,453,688,488,695,519,705,555,715,586,725,621,735,657,747,688,755,723,768,790,768,856,768,921,770,970,772,1010,782,1060,787,1130,792,1180,800,1240,808,1315,818,1440,818,1480,808],
    [60,1545,133,1535,200,1530,266,1522,333,1505,400,1480,467,1462,533,1450,604,1432,670,1412,737,1390,804,1368,872,1355,938,1338,1004,1320,1040,1305,1106,1270,1172,1238,1240,1205,1310,1180,1341,1162,1408,1148,1475,1125,1530,1105],
    [40,1097,120,1080,200,1062,280,1035,335,1000,390,980,450,962,515,950,700,952,860,952,950,940,1045,937,1130,922,1180,915,1282,910]
  ],
  line120: [
    [17,515,70,530,120,550,190,565,280,592,340,600,400,607,480,618,570,612,640,610,710,603,770,596,840,590,880,582,1000,583,1100,580,1200,577,1340,583,1450,585,1510,588],
    [180,1332,285,1342,420,1345,530,1355,640,1365,800,1368,900,1378,1020,1378,1090,1370,1220,1360,1360,1332,1460,1325,1545,1317],
    [130,1307,260,1300,310,1288,420,1265,640,1242,760,1235,860,1215,980,1195,1130,1165,1285,1135]
  ],
  line250: [
    [],[],
    [340,1248,420,1240,640,1240,860,1235,985,1222,1285,1222]
  ]
};

var NS = 'http://www.w3.org/2000/svg';
function el(parent, tag, attrs, text) {
  var n = document.createElementNS(NS, tag);
  for (var k in attrs) n.setAttribute(k, attrs[k]);
  if (text) n.textContent = text;
  parent.appendChild(n);
  return n;
}
function candleX(i) { return 6.5 + 12.85 * i; }

// section mappers from chart-section units to page pixels
var SECTION = [
  function (x, y) { return [x / 2.613, 330 + y / 3]; },
  function (x, y) { return [560 + x / 2.613, 80 + y / 3]; },
  function (x, y) { return [1140 + x / 2.45, 80 + y / 3]; }
];

function maPoints(sections) {
  var out = [];
  sections.forEach(function (flat, s) {
    for (var j = 0; j < flat.length; j += 2) {
      var p = SECTION[s](flat[j], flat[j + 1]);
      out.push(p[0].toFixed(1) + ',' + p[1].toFixed(1));
    }
  });
  return out.join(' ');
}

function drawMain() {
  var svg = document.getElementById('chart-main');
  var prices = ['13.50','13.25','13.00','12.75','12.50','12.25','12.00','11.75','11.50','11.25','11.00','10.75','10.50','10.25','10.00','9.75','9.50'];
  var ys = [123.3,165.3,206.5,248.3,290.3,331.7,372.7,415,456.7,499,541,583.3,623.3,665,707.3,749.5,791.7];

  ys.forEach(function (y, i) {
    if (i % 2 === 0) el(svg, 'line', { x1: 2, x2: 1710, y1: y, y2: y, 'class': 'gridline' });
  });

  function candle(d, i, base) {
    var x = Math.round(candleX(i));
    var top = base + d[0] / 3, bot = base + d[1] / 3;
    var k = d[4];
    var g = el(svg, 'g', { 'class': 'crisp' });
    el(g, 'line', { x1: x, x2: x, y1: base + d[2] / 3, y2: base + d[3] / 3, 'class': 'c-wick-' + k });
    if (k === 'r') {
      el(g, 'rect', { x: x - 4.5, y: top, width: 9, height: bot - top, 'class': 'c-body-r' });
    } else if (k === 'c' && bot - top > 3) {
      el(g, 'rect', { x: x - 5, y: top, width: 10, height: bot - top, 'class': 'c-body-c' });
    } else {
      el(g, 'rect', { x: x - 5, y: top, width: 10, height: 1.5, 'class': 'c-body-' + k });
    }
  }
  CANDLES_A.forEach(function (d, i) { candle(d, i, 330); });
  CANDLES_B.forEach(function (d, i) { candle(d, i + 45, 80); });

  el(svg, 'rect', { x: 1283, y: 246.7, width: 426, height: 11, fill: '#808080' });

  ['line120', 'line250', 'line60', 'line20', 'line10', 'line5'].forEach(function (name) {
    el(svg, 'polyline', { points: maPoints(MA[name]), 'class': 'ma ' + name });
  });

  // extreme price call-outs
  el(svg, 'path', { d: 'M1279 99L1296 104M1279 99L1283 96M1279 99L1283 102', stroke: '#b0b0b0', 'stroke-width': 1.2, fill: 'none' });
  el(svg, 'text', { x: 1299, y: 112, 'class': 'chlabel' }, '13.65');
  el(svg, 'text', { x: 1286, y: 240, 'class': 'chlabel' }, '12.77 - 12.69');
  el(svg, 'path', { d: 'M84 793H100M84 793L89 789M84 793L89 798', stroke: '#b0b0b0', 'stroke-width': 1.2, fill: 'none' });
  el(svg, 'text', { x: 103, y: 803.5, 'class': 'chlabel' }, '9.48');

  el(svg, 'line', { x1: 1711, x2: 1711, y1: 68, y2: 826, 'class': 'axisline' });
  ys.forEach(function (y, i) {
    el(svg, 'line', { x1: 1712, x2: 1720, y1: y, y2: y, 'class': 'axtick' });
    el(svg, 'text', { x: 1733, y: y + 6.5, 'class': 'axlabel' }, prices[i]);
  });
}

function drawIndicator() {
  var svg = document.getElementById('chart-ind');
  [857, 941, 1024, 1108, 1192].forEach(function (y) {
    el(svg, 'line', { x1: 2, x2: 1710, y1: y, y2: y, 'class': 'gridline' });
  });
  el(svg, 'line', { x1: 6.5, x2: 1664, y1: 1272.5, y2: 1272.5, stroke: '#e8e8e8', 'stroke-width': 2 });
  el(svg, 'polyline', { points: '943,1273 957.4,857 972,1273', fill: 'none', stroke: '#d8d8d8', 'stroke-width': 1.5, 'stroke-linejoin': 'miter' });
  for (var i = 5; i < 130; i += 5) {
    el(svg, 'rect', { x: candleX(i) - 2, y: 1269.5, width: 4, height: 6, fill: '#fff' });
  }
  el(svg, 'line', { x1: 1711, x2: 1711, y1: 827, y2: 1282, 'class': 'axisline' });
  [['1.00', 857], ['0.80', 941], ['0.70', 983], ['0.60', 1024], ['0.50', 1066], ['0.40', 1108], ['0.30', 1150], ['0.20', 1192]].forEach(function (r) {
    el(svg, 'line', { x1: 1712, x2: 1720, y1: r[1], y2: r[1], 'class': 'axtick' });
    el(svg, 'text', { x: 1743, y: r[1] + 6.5, 'class': 'axlabel-dim' }, r[0]);
  });
  el(svg, 'rect', { x: 1712, y: 889, width: 75, height: 24, fill: '#000080' });
  el(svg, 'text', { x: 1714, y: 907.5, 'class': 'chlabel' }, '0.86');
}

function drawDates() {
  var svg = document.getElementById('chart-dates');
  [140, 210, 345, 416, 486, 626, 696, 975, 1111, 1174, 1377, 1440, 1508, 1670].forEach(function (x) {
    el(svg, 'line', { x1: x, x2: x, y1: 1283, y2: 1287, 'class': 'axtick' });
  });
  [[69, '10'], [275.5, '11'], [558, '12'], [1046.5, '2'], [1302, '3'], [1599, '4']].forEach(function (m) {
    el(svg, 'line', { x1: m[0], x2: m[0], y1: 1283, y2: 1305, 'class': 'axtick' });
    el(svg, 'text', { x: m[0] + 3, y: 1300.5, 'class': 'dlabel' }, m[1]);
  });
  el(svg, 'text', { x: 7, y: 1300.5, 'class': 'dlabel' }, '2022年');
  el(svg, 'rect', { x: 779, y: 1283, width: 117, height: 22, fill: '#000080' });
  el(svg, 'text', { x: 781, y: 1300, 'class': 'dcur' }, '2022/12/26/一');
  el(svg, 'line', { x1: 1711, x2: 1711, y1: 1283, y2: 1305, 'class': 'axisline' });
  el(svg, 'text', { x: 1729, y: 1300.5, 'class': 'dright' }, '日线');
}

drawMain();
drawIndicator();
drawDates();
```
